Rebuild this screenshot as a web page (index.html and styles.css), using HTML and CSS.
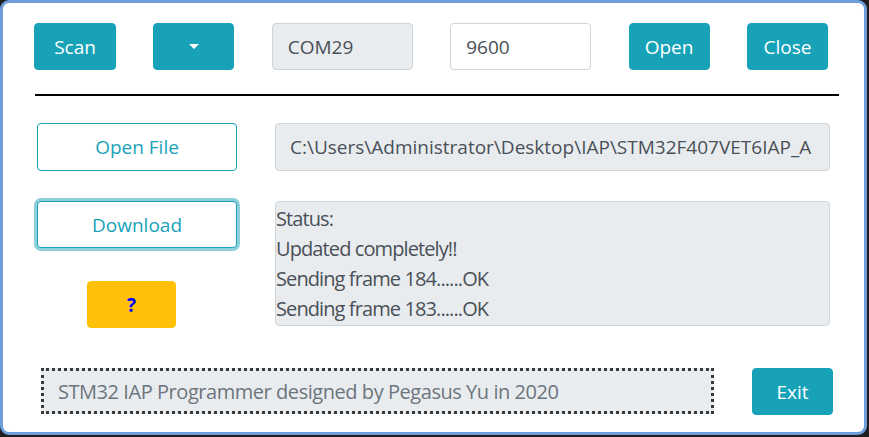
FILE: index.html
```html
<!DOCTYPE html>
<html>
<head>
<meta charset="utf-8">
<link rel="stylesheet" href="styles.css">
</head>
<body>
<div class="window">
  <div class="toprow">
    <button class="btn info wide">Scan</button>
    <button class="btn info caret-btn"><span class="caret"></span></button>
    <div class="field ro">COM29</div>
    <div class="field">9600</div>
    <button class="btn info">Open</button>
    <button class="btn info">Close</button>
  </div>
  <div class="rule"></div>
  <div class="middle">
    <div class="leftcol">
      <button class="btn outline openfile">Open File</button>
      <button class="btn outline download">Download</button>
      <button class="btn warn help">?</button>
    </div>
    <div class="rightcol">
      <div class="field ro path">C:\Users\Administrator\Desktop\IAP\STM32F407VET6IAP_A</div>
      <div class="status">
        <div>Status:</div>
        <div>Updated completely!!</div>
        <div>Sending frame 184......OK</div>
        <div>Sending frame 183......OK</div>
      </div>
    </div>
  </div>
  <div class="bottomrow">
    <div class="credit">STM32 IAP Programmer designed by Pegasus Yu in 2020</div>
    <button class="btn info exit">Exit</button>
  </div>
</div>
</body>
</html>
```
FILE: styles.css
```css
* { box-sizing: border-box; }
html, body { margin: 0; padding: 0; }
body {
  width: 869px;
  height: 437px;
  background: #1d1d1d;
  font-family: "Open Sans", "Noto Sans", sans-serif;
  font-size: 19px;
  overflow: hidden;
}
.window {
  width: 867px;
  height: 435px;
  background: #ffffff;
  border: 3px solid #6f9ddb;
  border-radius: 9px;
}
.toprow {
  display: flex;
  gap: 37.4px;
  padding: 20px 0 0 31px;
}
.btn {
  font-family: inherit;
  font-size: 19px;
  border-radius: 4px;
  border: 1px solid transparent;
  padding: 0;
  margin: 0;
  height: 47px;
  cursor: pointer;
}
.info {
  background: #17a2b8;
  border-color: #17a2b8;
  color: #ffffff;
  width: 81px;
}
.wide { width: 82px; }
.caret-btn { width: 81px; display: flex; align-items: center; justify-content: center; }
.caret {
  width: 0; height: 0;
  border-left: 5.5px solid transparent;
  border-right: 5.5px solid transparent;
  border-top: 5.5px solid #ffffff;
}
.field {
  width: 141px;
  height: 47px;
  border: 1px solid #ced4da;
  border-radius: 4px;
  background: #ffffff;
  color: #495057;
  padding-left: 15px;
  display: flex;
  align-items: center;
}
.ro { background: #e9ecef; }
.rule {
  margin: 24px 0 0 32px;
  width: 804px;
  height: 2px;
  background: #000000;
}
.middle {
  display: flex;
  gap: 38px;
  margin: 27px 0 0 34px;
}
.leftcol { width: 200px; display: flex; flex-direction: column; }
.outline {
  background: #ffffff;
  border-color: #17a2b8;
  color: #17a2b8;
  width: 200px;
}
.openfile { height: 48px; }
.download { margin-top: 30px; box-shadow: 0 0 0 3px #8dd0da; }
.help {
  margin: 33px 0 0 50px;
  width: 89px;
  font-size: 19px;
  font-weight: bold;
  color: #0000ff;
}
.warn { background: #ffc107; border-color: #ffc107; }
.rightcol { width: 555px; display: flex; flex-direction: column; }
.path { width: 555px; height: 48px; padding-left: 14px; white-space: nowrap; overflow: hidden; }
.status {
  margin-top: 30px;
  height: 125px;
  background: #e9ecef;
  border: 1px solid #ced4da;
  border-radius: 4px;
  color: #495057;
  font-size: 20px;
  letter-spacing: -0.9px;
  line-height: 30px;
  padding: 2px 0 0 0;
}
.bottomrow {
  display: flex;
  gap: 38px;
  margin: 40px 0 0 38px;
}
.credit {
  width: 673px;
  height: 46px;
  background: #e9ecef;
  border: 3px dotted #3a3a3a;
  color: #6c757d;
  font-size: 20px;
  letter-spacing: -0.45px;
  padding-left: 14px;
  display: flex;
  align-items: center;
}
.exit { width: 81px; }
```
